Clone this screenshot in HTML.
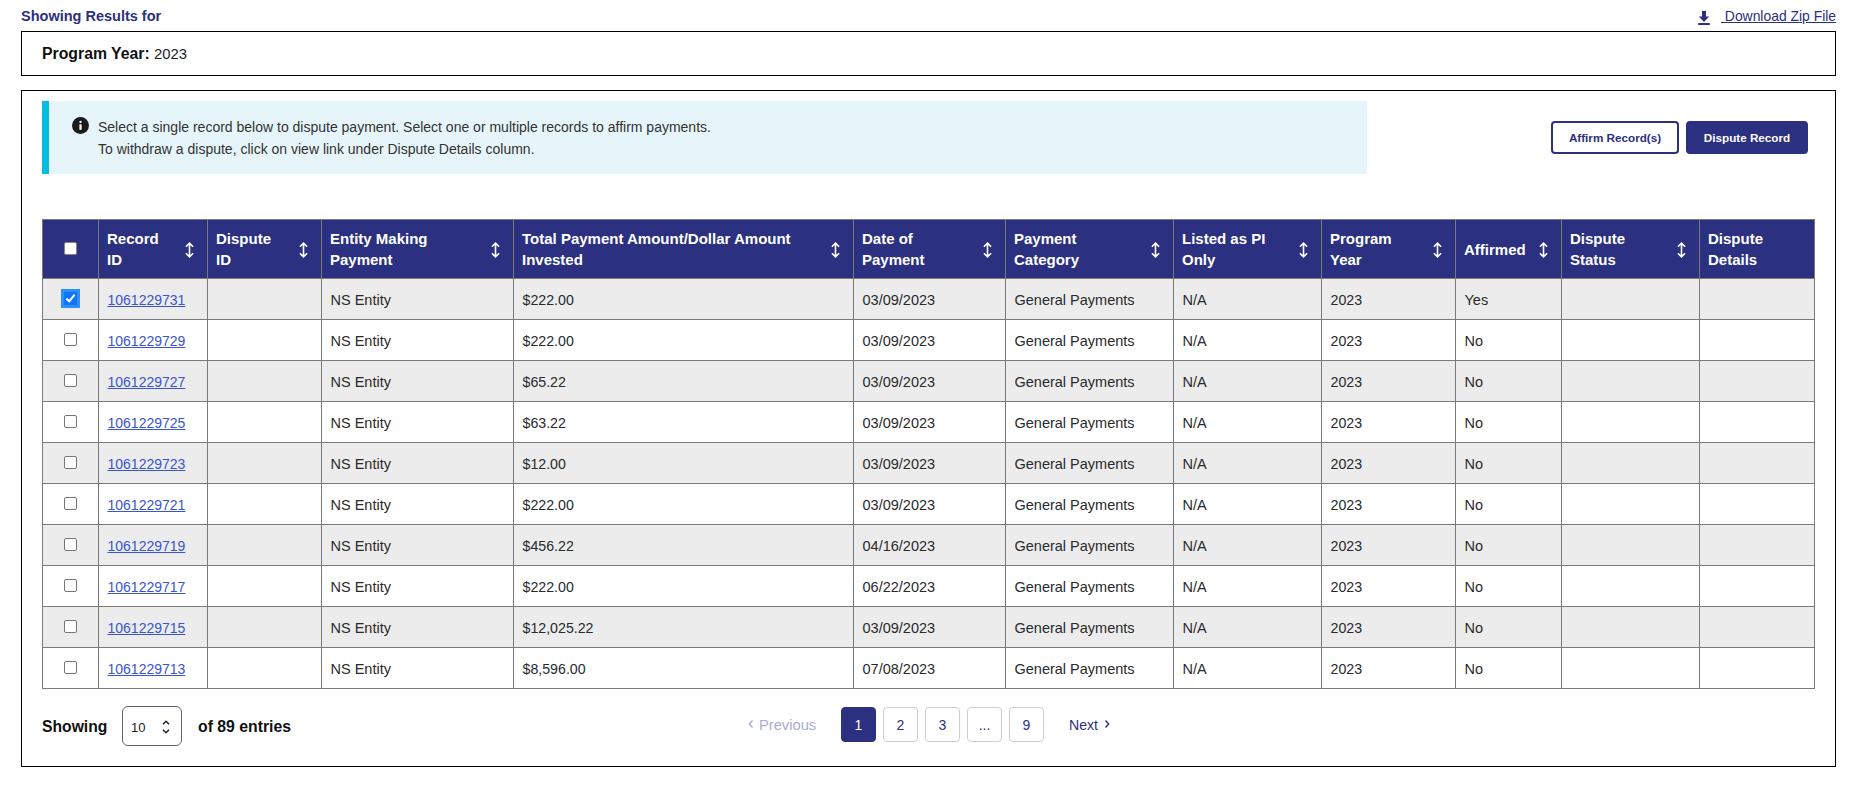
<!DOCTYPE html>
<html><head><meta charset="utf-8"><title>Results</title>
<style>
*{margin:0;padding:0;box-sizing:border-box}
html,body{width:1855px;height:785px;overflow:hidden;background:#fff}
body{position:relative;font-family:"Liberation Sans",sans-serif;color:#222}
.a{position:absolute;white-space:nowrap}
.hd{color:#fff;font-weight:bold;font-size:15px;line-height:21px}
.cell{font-size:14px;line-height:16px;color:#2a2a2a}
.lnk{color:#3a55d2;text-decoration:underline;text-underline-offset:1px}
.vl{position:absolute;width:1px;background:#7a7a7a}
.hl{position:absolute;height:1px;background:#7a7a7a}
.cb{position:absolute;width:13px;height:13px;border:1px solid #767676;border-radius:2px;background:#fff}
.pg{position:absolute;top:707px;width:35px;height:35px;border:1px solid #cfcfcf;border-radius:4px;text-align:center;line-height:33px;padding-top:1px;font-size:14px;color:#2b3080}
</style></head><body>

<div class="a" style="left:21px;top:6px;font-size:14.5px;line-height:20px;font-weight:bold;color:#2b3080">Showing Results for</div>
<svg class="a" style="left:1697px;top:10px" width="14" height="16" viewBox="0 0 14 16"><path d="M5 1h4v5.5h3.2L7 12 1.8 6.5H5z" fill="#2b3080"/><rect x="1.2" y="13" width="11.6" height="2" fill="#2b3080"/></svg>
<div class="a" style="left:1721px;top:8px;font-size:13.9px;line-height:17px;color:#2b3080;text-decoration:underline;text-underline-offset:1px">&nbsp;Download Zip File</div>
<div class="a" style="left:21px;top:31px;width:1815px;height:45px;border:1px solid #000"></div>
<div class="a" style="left:42px;top:44px;font-size:15.8px;line-height:20px;color:#111"><b>Program Year:</b> <span style="font-size:14.8px;color:#222">2023</span></div>
<div class="a" style="left:21px;top:90px;width:1815px;height:677px;border:1px solid #000"></div>
<div class="a" style="left:42px;top:101px;width:1325px;height:73px;background:#e6f5f9;border-left:7px solid #00bde3"></div>
<svg class="a" style="left:71px;top:116px" width="19" height="19" viewBox="0 0 19 19"><circle cx="9.5" cy="9.5" r="8.5" fill="#1b1b1b"/><circle cx="9.5" cy="5.9" r="1.15" fill="#fff"/><rect x="8.4" y="8.3" width="2.2" height="5.5" fill="#fff"/></svg>
<div class="a" style="left:98px;top:116px;font-size:14px;line-height:22px;color:#333">Select a single record below to dispute payment. Select one or multiple records to affirm payments.<br>To withdraw a dispute, click on view link under Dispute Details column.</div>
<div class="a" style="left:1551px;top:121px;width:128px;height:33px;border:2px solid #2b3080;border-radius:4px;background:#fff;color:#2b3080;font-weight:bold;font-size:11.7px;line-height:29px;text-align:center">Affirm Record(s)</div>
<div class="a" style="left:1686px;top:121px;width:122px;height:33px;border-radius:4px;background:#2b3080;color:#fff;font-weight:bold;font-size:11.7px;line-height:33px;text-align:center">Dispute Record</div>
<div class="a" style="left:42px;top:219px;width:1773px;height:59px;background:#2b3080"></div>
<div class="a" style="left:42px;top:278px;width:1773px;height:41px;background:#ececec"></div>
<div class="a" style="left:42px;top:319px;width:1773px;height:41px;background:#fff"></div>
<div class="a" style="left:42px;top:360px;width:1773px;height:41px;background:#ececec"></div>
<div class="a" style="left:42px;top:401px;width:1773px;height:41px;background:#fff"></div>
<div class="a" style="left:42px;top:442px;width:1773px;height:41px;background:#ececec"></div>
<div class="a" style="left:42px;top:483px;width:1773px;height:41px;background:#fff"></div>
<div class="a" style="left:42px;top:524px;width:1773px;height:41px;background:#ececec"></div>
<div class="a" style="left:42px;top:565px;width:1773px;height:41px;background:#fff"></div>
<div class="a" style="left:42px;top:606px;width:1773px;height:41px;background:#ececec"></div>
<div class="a" style="left:42px;top:647px;width:1773px;height:41px;background:#fff"></div>
<div class="vl" style="left:42px;top:219px;height:470px"></div>
<div class="vl" style="left:98px;top:219px;height:470px"></div>
<div class="vl" style="left:207px;top:219px;height:470px"></div>
<div class="vl" style="left:321px;top:219px;height:470px"></div>
<div class="vl" style="left:513px;top:219px;height:470px"></div>
<div class="vl" style="left:853px;top:219px;height:470px"></div>
<div class="vl" style="left:1005px;top:219px;height:470px"></div>
<div class="vl" style="left:1173px;top:219px;height:470px"></div>
<div class="vl" style="left:1321px;top:219px;height:470px"></div>
<div class="vl" style="left:1455px;top:219px;height:470px"></div>
<div class="vl" style="left:1561px;top:219px;height:470px"></div>
<div class="vl" style="left:1699px;top:219px;height:470px"></div>
<div class="vl" style="left:1814px;top:219px;height:470px"></div>
<div class="hl" style="left:42px;top:219px;width:1773px"></div>
<div class="hl" style="left:42px;top:278px;width:1773px"></div>
<div class="hl" style="left:42px;top:319px;width:1773px"></div>
<div class="hl" style="left:42px;top:360px;width:1773px"></div>
<div class="hl" style="left:42px;top:401px;width:1773px"></div>
<div class="hl" style="left:42px;top:442px;width:1773px"></div>
<div class="hl" style="left:42px;top:483px;width:1773px"></div>
<div class="hl" style="left:42px;top:524px;width:1773px"></div>
<div class="hl" style="left:42px;top:565px;width:1773px"></div>
<div class="hl" style="left:42px;top:606px;width:1773px"></div>
<div class="hl" style="left:42px;top:647px;width:1773px"></div>
<div class="hl" style="left:42px;top:688px;width:1773px"></div>
<div class="cb" style="left:64px;top:242px;border-color:#888"></div>
<div class="a hd" style="left:107px;top:228px">Record<br>ID</div>
<svg class="a" style="left:185px;top:242px" width="9" height="16" viewBox="0 0 9 16"><path d="M4.5 1.2V14.8M0.9 4.8L4.5 1.2 8.1 4.8M0.9 11.2L4.5 14.8 8.1 11.2" stroke="#fff" stroke-width="1.6" fill="none"/></svg>
<div class="a hd" style="left:216px;top:228px">Dispute<br>ID</div>
<svg class="a" style="left:299px;top:242px" width="9" height="16" viewBox="0 0 9 16"><path d="M4.5 1.2V14.8M0.9 4.8L4.5 1.2 8.1 4.8M0.9 11.2L4.5 14.8 8.1 11.2" stroke="#fff" stroke-width="1.6" fill="none"/></svg>
<div class="a hd" style="left:330px;top:228px">Entity Making<br>Payment</div>
<svg class="a" style="left:491px;top:242px" width="9" height="16" viewBox="0 0 9 16"><path d="M4.5 1.2V14.8M0.9 4.8L4.5 1.2 8.1 4.8M0.9 11.2L4.5 14.8 8.1 11.2" stroke="#fff" stroke-width="1.6" fill="none"/></svg>
<div class="a hd" style="left:522px;top:228px">Total Payment Amount/Dollar Amount<br>Invested</div>
<svg class="a" style="left:831px;top:242px" width="9" height="16" viewBox="0 0 9 16"><path d="M4.5 1.2V14.8M0.9 4.8L4.5 1.2 8.1 4.8M0.9 11.2L4.5 14.8 8.1 11.2" stroke="#fff" stroke-width="1.6" fill="none"/></svg>
<div class="a hd" style="left:862px;top:228px">Date of<br>Payment</div>
<svg class="a" style="left:983px;top:242px" width="9" height="16" viewBox="0 0 9 16"><path d="M4.5 1.2V14.8M0.9 4.8L4.5 1.2 8.1 4.8M0.9 11.2L4.5 14.8 8.1 11.2" stroke="#fff" stroke-width="1.6" fill="none"/></svg>
<div class="a hd" style="left:1014px;top:228px">Payment<br>Category</div>
<svg class="a" style="left:1151px;top:242px" width="9" height="16" viewBox="0 0 9 16"><path d="M4.5 1.2V14.8M0.9 4.8L4.5 1.2 8.1 4.8M0.9 11.2L4.5 14.8 8.1 11.2" stroke="#fff" stroke-width="1.6" fill="none"/></svg>
<div class="a hd" style="left:1182px;top:228px">Listed as PI<br>Only</div>
<svg class="a" style="left:1299px;top:242px" width="9" height="16" viewBox="0 0 9 16"><path d="M4.5 1.2V14.8M0.9 4.8L4.5 1.2 8.1 4.8M0.9 11.2L4.5 14.8 8.1 11.2" stroke="#fff" stroke-width="1.6" fill="none"/></svg>
<div class="a hd" style="left:1330px;top:228px">Program<br>Year</div>
<svg class="a" style="left:1433px;top:242px" width="9" height="16" viewBox="0 0 9 16"><path d="M4.5 1.2V14.8M0.9 4.8L4.5 1.2 8.1 4.8M0.9 11.2L4.5 14.8 8.1 11.2" stroke="#fff" stroke-width="1.6" fill="none"/></svg>
<div class="a hd" style="left:1464px;top:239px">Affirmed</div>
<svg class="a" style="left:1539px;top:242px" width="9" height="16" viewBox="0 0 9 16"><path d="M4.5 1.2V14.8M0.9 4.8L4.5 1.2 8.1 4.8M0.9 11.2L4.5 14.8 8.1 11.2" stroke="#fff" stroke-width="1.6" fill="none"/></svg>
<div class="a hd" style="left:1570px;top:228px">Dispute<br>Status</div>
<svg class="a" style="left:1677px;top:242px" width="9" height="16" viewBox="0 0 9 16"><path d="M4.5 1.2V14.8M0.9 4.8L4.5 1.2 8.1 4.8M0.9 11.2L4.5 14.8 8.1 11.2" stroke="#fff" stroke-width="1.6" fill="none"/></svg>
<div class="a hd" style="left:1708px;top:228px">Dispute<br>Details</div>
<div class="a" style="left:61px;top:289px;width:19px;height:19px;background:#2b8fff"></div>
<div class="a" style="left:64px;top:292px;width:13px;height:13px;background:#0b76fb"></div>
<svg class="a" style="left:64px;top:292px" width="13" height="13" viewBox="0 0 13 13"><path d="M2.3 6.6L5.3 9.3 10.6 2.7" stroke="#fff" stroke-width="2.1" fill="none"/></svg>
<div class="a cell lnk" style="left:107.5px;top:292px">1061229731</div>
<div class="a cell" style="left:330.5px;top:292px;font-size:14.5px">NS Entity</div>
<div class="a cell" style="left:522.5px;top:292px;font-size:14.2px">$222.00</div>
<div class="a cell" style="left:862.5px;top:292px;font-size:14.5px">03/09/2023</div>
<div class="a cell" style="left:1014.5px;top:292px;font-size:14.5px">General Payments</div>
<div class="a cell" style="left:1182.5px;top:292px;font-size:14.5px">N/A</div>
<div class="a cell" style="left:1330.5px;top:292px;font-size:14.2px">2023</div>
<div class="a cell" style="left:1464.5px;top:292px;font-size:14.5px">Yes</div>
<div class="cb" style="left:64px;top:333px"></div>
<div class="a cell lnk" style="left:107.5px;top:333px">1061229729</div>
<div class="a cell" style="left:330.5px;top:333px;font-size:14.5px">NS Entity</div>
<div class="a cell" style="left:522.5px;top:333px;font-size:14.2px">$222.00</div>
<div class="a cell" style="left:862.5px;top:333px;font-size:14.5px">03/09/2023</div>
<div class="a cell" style="left:1014.5px;top:333px;font-size:14.5px">General Payments</div>
<div class="a cell" style="left:1182.5px;top:333px;font-size:14.5px">N/A</div>
<div class="a cell" style="left:1330.5px;top:333px;font-size:14.2px">2023</div>
<div class="a cell" style="left:1464.5px;top:333px;font-size:14.5px">No</div>
<div class="cb" style="left:64px;top:374px"></div>
<div class="a cell lnk" style="left:107.5px;top:374px">1061229727</div>
<div class="a cell" style="left:330.5px;top:374px;font-size:14.5px">NS Entity</div>
<div class="a cell" style="left:522.5px;top:374px;font-size:14.2px">$65.22</div>
<div class="a cell" style="left:862.5px;top:374px;font-size:14.5px">03/09/2023</div>
<div class="a cell" style="left:1014.5px;top:374px;font-size:14.5px">General Payments</div>
<div class="a cell" style="left:1182.5px;top:374px;font-size:14.5px">N/A</div>
<div class="a cell" style="left:1330.5px;top:374px;font-size:14.2px">2023</div>
<div class="a cell" style="left:1464.5px;top:374px;font-size:14.5px">No</div>
<div class="cb" style="left:64px;top:415px"></div>
<div class="a cell lnk" style="left:107.5px;top:415px">1061229725</div>
<div class="a cell" style="left:330.5px;top:415px;font-size:14.5px">NS Entity</div>
<div class="a cell" style="left:522.5px;top:415px;font-size:14.2px">$63.22</div>
<div class="a cell" style="left:862.5px;top:415px;font-size:14.5px">03/09/2023</div>
<div class="a cell" style="left:1014.5px;top:415px;font-size:14.5px">General Payments</div>
<div class="a cell" style="left:1182.5px;top:415px;font-size:14.5px">N/A</div>
<div class="a cell" style="left:1330.5px;top:415px;font-size:14.2px">2023</div>
<div class="a cell" style="left:1464.5px;top:415px;font-size:14.5px">No</div>
<div class="cb" style="left:64px;top:456px"></div>
<div class="a cell lnk" style="left:107.5px;top:456px">1061229723</div>
<div class="a cell" style="left:330.5px;top:456px;font-size:14.5px">NS Entity</div>
<div class="a cell" style="left:522.5px;top:456px;font-size:14.2px">$12.00</div>
<div class="a cell" style="left:862.5px;top:456px;font-size:14.5px">03/09/2023</div>
<div class="a cell" style="left:1014.5px;top:456px;font-size:14.5px">General Payments</div>
<div class="a cell" style="left:1182.5px;top:456px;font-size:14.5px">N/A</div>
<div class="a cell" style="left:1330.5px;top:456px;font-size:14.2px">2023</div>
<div class="a cell" style="left:1464.5px;top:456px;font-size:14.5px">No</div>
<div class="cb" style="left:64px;top:497px"></div>
<div class="a cell lnk" style="left:107.5px;top:497px">1061229721</div>
<div class="a cell" style="left:330.5px;top:497px;font-size:14.5px">NS Entity</div>
<div class="a cell" style="left:522.5px;top:497px;font-size:14.2px">$222.00</div>
<div class="a cell" style="left:862.5px;top:497px;font-size:14.5px">03/09/2023</div>
<div class="a cell" style="left:1014.5px;top:497px;font-size:14.5px">General Payments</div>
<div class="a cell" style="left:1182.5px;top:497px;font-size:14.5px">N/A</div>
<div class="a cell" style="left:1330.5px;top:497px;font-size:14.2px">2023</div>
<div class="a cell" style="left:1464.5px;top:497px;font-size:14.5px">No</div>
<div class="cb" style="left:64px;top:538px"></div>
<div class="a cell lnk" style="left:107.5px;top:538px">1061229719</div>
<div class="a cell" style="left:330.5px;top:538px;font-size:14.5px">NS Entity</div>
<div class="a cell" style="left:522.5px;top:538px;font-size:14.2px">$456.22</div>
<div class="a cell" style="left:862.5px;top:538px;font-size:14.5px">04/16/2023</div>
<div class="a cell" style="left:1014.5px;top:538px;font-size:14.5px">General Payments</div>
<div class="a cell" style="left:1182.5px;top:538px;font-size:14.5px">N/A</div>
<div class="a cell" style="left:1330.5px;top:538px;font-size:14.2px">2023</div>
<div class="a cell" style="left:1464.5px;top:538px;font-size:14.5px">No</div>
<div class="cb" style="left:64px;top:579px"></div>
<div class="a cell lnk" style="left:107.5px;top:579px">1061229717</div>
<div class="a cell" style="left:330.5px;top:579px;font-size:14.5px">NS Entity</div>
<div class="a cell" style="left:522.5px;top:579px;font-size:14.2px">$222.00</div>
<div class="a cell" style="left:862.5px;top:579px;font-size:14.5px">06/22/2023</div>
<div class="a cell" style="left:1014.5px;top:579px;font-size:14.5px">General Payments</div>
<div class="a cell" style="left:1182.5px;top:579px;font-size:14.5px">N/A</div>
<div class="a cell" style="left:1330.5px;top:579px;font-size:14.2px">2023</div>
<div class="a cell" style="left:1464.5px;top:579px;font-size:14.5px">No</div>
<div class="cb" style="left:64px;top:620px"></div>
<div class="a cell lnk" style="left:107.5px;top:620px">1061229715</div>
<div class="a cell" style="left:330.5px;top:620px;font-size:14.5px">NS Entity</div>
<div class="a cell" style="left:522.5px;top:620px;font-size:14.2px">$12,025.22</div>
<div class="a cell" style="left:862.5px;top:620px;font-size:14.5px">03/09/2023</div>
<div class="a cell" style="left:1014.5px;top:620px;font-size:14.5px">General Payments</div>
<div class="a cell" style="left:1182.5px;top:620px;font-size:14.5px">N/A</div>
<div class="a cell" style="left:1330.5px;top:620px;font-size:14.2px">2023</div>
<div class="a cell" style="left:1464.5px;top:620px;font-size:14.5px">No</div>
<div class="cb" style="left:64px;top:661px"></div>
<div class="a cell lnk" style="left:107.5px;top:661px">1061229713</div>
<div class="a cell" style="left:330.5px;top:661px;font-size:14.5px">NS Entity</div>
<div class="a cell" style="left:522.5px;top:661px;font-size:14.2px">$8,596.00</div>
<div class="a cell" style="left:862.5px;top:661px;font-size:14.5px">07/08/2023</div>
<div class="a cell" style="left:1014.5px;top:661px;font-size:14.5px">General Payments</div>
<div class="a cell" style="left:1182.5px;top:661px;font-size:14.5px">N/A</div>
<div class="a cell" style="left:1330.5px;top:661px;font-size:14.2px">2023</div>
<div class="a cell" style="left:1464.5px;top:661px;font-size:14.5px">No</div>
<div class="a" style="left:42px;top:717px;font-size:15.7px;line-height:20px;font-weight:bold;color:#111">Showing</div>
<div class="a" style="left:122px;top:706px;width:60px;height:40px;border:1px solid #5f6570;border-radius:6px;background:#fff"></div>
<div class="a" style="left:131px;top:720px;font-size:13px;line-height:16px;color:#222">10</div>
<svg class="a" style="left:161px;top:719px" width="10" height="16" viewBox="0 0 10 16"><path d="M2 5.2L5 2.2 8 5.2M2 10.8L5 13.8 8 10.8" stroke="#222" stroke-width="1.5" fill="none"/></svg>
<div class="a" style="left:198px;top:717px;font-size:15.8px;line-height:20px;font-weight:bold;color:#111">of 89 entries</div>
<svg class="a" style="left:747px;top:719px" width="8" height="10" viewBox="0 0 8 10"><path d="M5.5 1.5L2.3 5 5.5 8.5" stroke="#a9acd2" stroke-width="1.4" fill="none"/></svg>
<div class="a" style="left:759px;top:717px;font-size:14.7px;line-height:17px;color:#a9acd2">Previous</div>
<div class="pg" style="left:841px;background:#2b3080;border-color:#2b3080;color:#fff">1</div>
<div class="pg" style="left:883px">2</div>
<div class="pg" style="left:925px">3</div>
<div class="pg" style="left:967px">...</div>
<div class="pg" style="left:1009px">9</div>
<div class="a" style="left:1069px;top:717px;font-size:14.1px;line-height:17px;color:#2b3080">Next</div>
<svg class="a" style="left:1103px;top:719px" width="8" height="10" viewBox="0 0 8 10"><path d="M2.5 1.5L5.7 5 2.5 8.5" stroke="#2b3080" stroke-width="1.4" fill="none"/></svg>
</body></html>
